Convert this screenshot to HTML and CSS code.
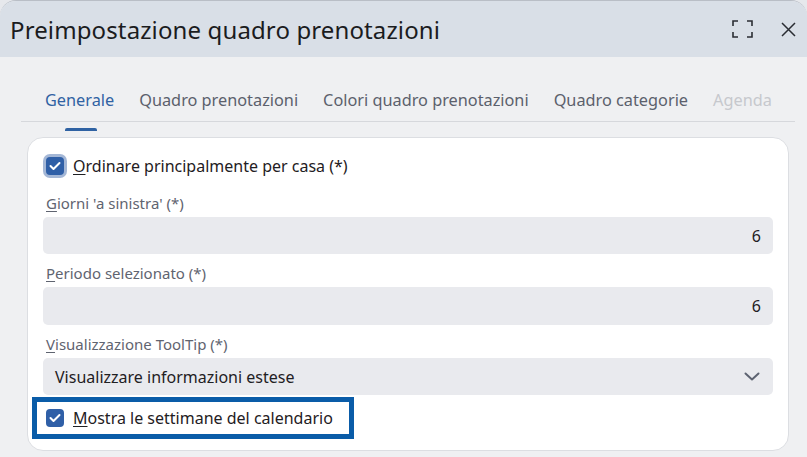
FILE: index.html
```html
<!DOCTYPE html>
<html lang="it">
<head>
<meta charset="utf-8">
<title>Preimpostazione quadro prenotazioni</title>
<link rel="stylesheet" href="styles.css">
</head>
<body>
<div class="dialog">
  <div class="header">
    <div class="title">Preimpostazione quadro prenotazioni</div>
    <div class="actions">
      <span class="icon-btn">
        <svg width="21" height="18" viewBox="0 0 21 18" fill="none" stroke="#2a2d33" stroke-width="1.6">
          <path d="M1 6V1h5M15 1h5v5M20 12v5h-5M6 17H1v-5"/>
        </svg>
      </span>
      <span class="icon-btn">
        <svg width="15" height="15" viewBox="0 0 15 15" fill="none" stroke="#2a2d33" stroke-width="1.5">
          <path d="M1 1l13 13M14 1L1 14"/>
        </svg>
      </span>
    </div>
  </div>
  <div class="content">
    <div class="tabs">
      <span class="tab active">Generale</span>
      <span class="tab">Quadro prenotazioni</span>
      <span class="tab">Colori quadro prenotazioni</span>
      <span class="tab">Quadro categorie</span>
      <span class="tab disabled">Agenda</span>
    </div>
    <div class="card">
      <label class="check-row">
        <span class="checkbox focused">
          <svg width="12" height="10" viewBox="0 0 12 10" fill="none" stroke="#fff" stroke-width="2" stroke-linecap="round" stroke-linejoin="round"><path d="M1.5 5l3 3 6-6"/></svg>
        </span>
        <span class="check-label"><u>O</u>rdinare principalmente per casa (*)</span>
      </label>
      <div class="field">
        <div class="field-label"><u>G</u>iorni 'a sinistra' (*)</div>
        <div class="input num">6</div>
      </div>
      <div class="field">
        <div class="field-label"><u>P</u>eriodo selezionato (*)</div>
        <div class="input num">6</div>
      </div>
      <div class="field">
        <div class="field-label"><u>V</u>isualizzazione ToolTip (*)</div>
        <div class="input select">
          <span>Visualizzare informazioni estese</span>
          <svg width="16" height="9" viewBox="0 0 16 9" fill="none" stroke="#5d6371" stroke-width="2" stroke-linecap="round" stroke-linejoin="round"><path d="M1.5 1.5l6.5 6 6.5-6"/></svg>
        </div>
      </div>
      <label class="check-row highlight">
        <span class="checkbox">
          <svg width="12" height="10" viewBox="0 0 12 10" fill="none" stroke="#fff" stroke-width="2" stroke-linecap="round" stroke-linejoin="round"><path d="M1.5 5l3 3 6-6"/></svg>
        </span>
        <span class="check-label"><u>M</u>ostra le settimane del calendario</span>
      </label>
    </div>
  </div>
</div>
</body>
</html>
```
FILE: styles.css
```css
html, body {
  margin: 0;
  padding: 0;
}
body {
  background: #e6e8ec;
  font-family: "Noto Sans", "Open Sans", sans-serif;
  width: 807px;
  height: 457px;
  overflow: hidden;
}
.dialog {
  box-sizing: border-box;
  width: 807px;
  height: 457px;
  background: #eff0f2;
  border-radius: 16px 16px 0 0;
  border-top: 1px solid #b9bec6;
  overflow: hidden;
}
.header {
  height: 56px;
  background: #d9dfe7;
  display: flex;
  align-items: center;
  justify-content: space-between;
  padding-left: 10px;
  padding-right: 11px;
}
.title {
  font-size: 24px;
  letter-spacing: 0.12px;
  color: #1b1c1e;
  margin-top: 1px;
}
.actions {
  display: flex;
  align-items: center;
  gap: 28px;
}
.icon-btn {
  display: flex;
}
.content {
  padding: 0 12px 0 21px;
}
.tabs {
  display: flex;
  margin-top: 32px;
  border-bottom: 1px solid #d6d8dc;
  height: 32px;
  padding-left: 11.5px;
}
.tab {
  position: relative;
  font-size: 16.3px;
  line-height: 22px;
  color: #5b606c;
  padding: 0 12.5px;
  white-space: nowrap;
}
.tab.active {
  color: #2f62a3;
}
.tab.active::after {
  content: "";
  position: absolute;
  left: 50%;
  margin-left: -15px;
  width: 32px;
  height: 3px;
  bottom: -10px;
  border-radius: 2px 2px 0 0;
  background: #2f62a3;
}
.tab.disabled {
  color: #c6c8cd;
}
.card {
  box-sizing: border-box;
  margin-top: 15px;
  margin-left: 6px;
  width: 762px;
  height: 314px;
  background: #fff;
  border: 1px solid #dcdee2;
  border-radius: 16px;
  padding: 16px 15px 0 15px;
}
.check-row {
  display: flex;
  align-items: center;
  height: 24px;
}
.checkbox {
  box-sizing: border-box;
  width: 18px;
  height: 18px;
  border-radius: 4px;
  background: #2f5fa7;
  display: flex;
  align-items: center;
  justify-content: center;
  margin-left: 3px;
  flex: none;
}
.checkbox.focused {
  box-shadow: 0 0 0 3px #a4b7d6;
}
.check-label {
  font-size: 16px;
  color: #1f2023;
  margin-left: 9px;
}
.check-label u, .field-label u {
  text-underline-offset: 2px;
}
.field {
  margin-top: 15px;
}
.field + .field {
  margin-top: 9px;
}
.field-label {
  font-size: 15px;
  line-height: 20px;
  color: #5f6470;
  padding-left: 3px;
  margin-bottom: 4px;
}
.input {
  box-sizing: border-box;
  height: 37px;
  background: #e9eaee;
  border-radius: 5px;
  font-size: 16px;
  color: #1f2023;
  display: flex;
  align-items: center;
  padding: 0 12px;
}
.input.num {
  justify-content: flex-end;
}
.field + .field .input.num {
  height: 38px;
}
.input.select {
  justify-content: space-between;
  padding-right: 13px;
}
.check-row.highlight {
  display: inline-flex;
  box-sizing: border-box;
  height: 42px;
  margin-top: 2px;
  margin-left: -11px;
  border: 5px solid #0a5ca8;
  padding: 0 16px 0 6px;
}
```
